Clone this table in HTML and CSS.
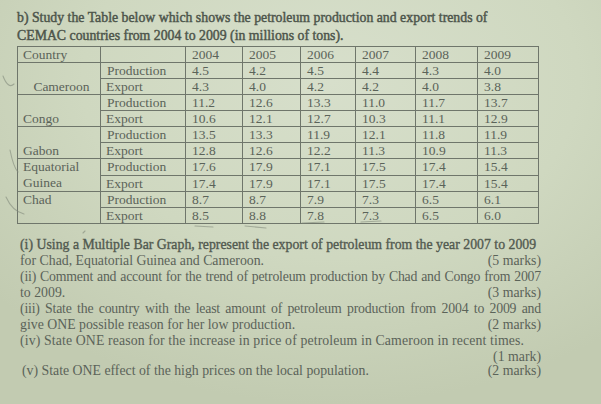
FILE: index.html
```html
<!DOCTYPE html>
<html lang="en">
<head>
<meta charset="utf-8">
<title>Petroleum production and export – CEMAC</title>
<link rel="stylesheet" href="styles.css">
</head>
<body>
<div class="sheet">
  <p class="head">b) Study the Table below which shows the petroleum production and export trends of<br>CEMAC countries from 2004 to 2009 (in millions of tons).</p>
  <table class="data">
    <colgroup>
      <col class="c-country"><col class="c-label"><col class="c-04"><col class="c-05"><col class="c-06"><col class="c-07"><col class="c-08"><col class="c-09">
    </colgroup>
    <tr><td>Country</td><td></td><td>2004</td><td>2005</td><td>2006</td><td>2007</td><td>2008</td><td>2009</td></tr>
    <tr><td rowspan="2" class="ctry center bottom">Cameroon</td><td>Production</td><td>4.5</td><td>4.2</td><td>4.5</td><td>4.4</td><td>4.3</td><td>4.0</td></tr>
    <tr><td>Export</td><td>4.3</td><td>4.0</td><td>4.2</td><td>4.2</td><td>4.0</td><td>3.8</td></tr>
    <tr><td rowspan="2" class="ctry bottom">Congo</td><td>Production</td><td>11.2</td><td>12.6</td><td>13.3</td><td>11.0</td><td>11.7</td><td>13.7</td></tr>
    <tr><td>Export</td><td>10.6</td><td>12.1</td><td>12.7</td><td>10.3</td><td>11.1</td><td>12.9</td></tr>
    <tr><td rowspan="2" class="ctry bottom">Gabon</td><td>Production</td><td>13.5</td><td>13.3</td><td>11.9</td><td>12.1</td><td>11.8</td><td>11.9</td></tr>
    <tr><td>Export</td><td>12.8</td><td>12.6</td><td>12.2</td><td>11.3</td><td>10.9</td><td>11.3</td></tr>
    <tr><td rowspan="2" class="ctry two">Equatorial<br>Guinea</td><td>Production</td><td>17.6</td><td>17.9</td><td>17.1</td><td>17.5</td><td>17.4</td><td>15.4</td></tr>
    <tr><td>Export</td><td>17.4</td><td>17.9</td><td>17.1</td><td>17.5</td><td>17.4</td><td>15.4</td></tr>
    <tr><td rowspan="2" class="ctry top">Chad</td><td>Production</td><td>8.7</td><td>8.7</td><td>7.9</td><td>7.3</td><td>6.5</td><td>6.1</td></tr>
    <tr><td>Export</td><td>8.5</td><td>8.8</td><td>7.8</td><td>7.3</td><td>6.5</td><td>6.0</td></tr>
  </table>

  <div class="questions">
    <div class="q">
      <div class="line heavy">(i) Using a Multiple Bar Graph, represent the export of petroleum from the year 2007 to 2009</div>
      <div class="line split"><span>for Chad, Equatorial Guinea and Cameroon.</span><span class="mk">(5 marks)</span></div>
    </div>
    <div class="q">
      <div class="line just">(ii) Comment and account for the trend of petroleum production by Chad and Congo from 2007</div>
      <div class="line split"><span>to 2009.</span><span class="mk">(3 marks)</span></div>
    </div>
    <div class="q">
      <div class="line just">(iii) State the country with the least amount of petroleum production from 2004 to 2009 and</div>
      <div class="line split"><span>give ONE possible reason for her low production.</span><span class="mk">(2 marks)</span></div>
    </div>
    <div class="q">
      <div class="line wide">(iv) State ONE reason for the increase in price of petroleum in Cameroon in recent times.</div>
      <div class="line split"><span></span><span class="mk">(1 mark)</span></div>
    </div>
    <div class="q last">
      <div class="line split indent"><span>(v) State ONE effect of the high prices on the local population.</span><span class="mk">(2 marks)</span></div>
    </div>
  </div>

  <svg class="pencil" width="601" height="404" viewBox="0 0 601 404" aria-hidden="true">
    <path d="M3 76 C6 84 10 88 14 84" />
    <path d="M10 150 C12 160 14 168 18 172" />
    <path d="M6 197 C10 206 16 212 24 214" />
    <path d="M195 226 L213 227" />
    <path d="M245 226 L266 228" />
    <path d="M302 223 L324 222" />
    <path d="M361 222 L381 221" />
    <path d="M83 233 L85 231" />
  </svg>
</div>
</body>
</html>
```

FILE: styles.css
```css
html, body {
  margin: 0;
  padding: 0;
}

body {
  width: 601px;
  height: 404px;
  overflow: hidden;
  background: radial-gradient(ellipse 75% 80% at 55% 20%, #d7dfcb 0%, #cfd8c0 55%, #c2cbb1 100%);
  font-family: "Liberation Serif", "Times New Roman", serif;
  color: #5b6359;
}

.sheet {
  position: relative;
  width: 601px;
  height: 404px;
  box-sizing: border-box;
  padding: 9px 0 0 17px;
}

.head {
  margin: 0 0 1px 0;
  width: 540px;
  font-size: 13.8px;
  line-height: 18px;
  color: #4d554b;
  -webkit-text-stroke: 0.45px #4d554b;
  white-space: nowrap;
}

.data {
  border-collapse: collapse;
  width: 521px;
  table-layout: fixed;
  font-size: 13.5px;
}

.c-country { width: 83px; }
.c-label { width: 85px; }
.c-04 { width: 57px; }
.c-05 { width: 58px; }
.c-06 { width: 55px; }
.c-07 { width: 60px; }
.c-08 { width: 62px; }
.c-09 { width: 61px; }

.data td {
  border: 1px solid #6f766b;
  height: 15px;
  line-height: 15px;
  padding: 0 0 0 6px;
  white-space: nowrap;
  vertical-align: middle;
}

.data td:first-child {
  padding-left: 5px;
}

.data .ctry {
  padding-left: 7px;
}

.data .center { text-align: center; padding-left: 0; }
.data .bottom { vertical-align: bottom; }
.data .top { vertical-align: top; }
.data .two { line-height: 16px; }

.questions {
  margin-top: 13px;
  width: 521px;
  padding-left: 3px;
  font-size: 13.8px;
  line-height: 16px;
}

.q.last {
  margin-top: -2px;
}

.line {
  white-space: nowrap;
}

.heavy {
  color: #525a50;
  -webkit-text-stroke: 0.35px #525a50;
}

.just {
  text-align: justify;
  text-align-last: justify;
  letter-spacing: -0.2px;
  word-spacing: -1px;
  white-space: normal;
}

.wide {
  letter-spacing: 0.12px;
}

.split {
  display: flex;
  justify-content: space-between;
}

.indent {
  padding-left: 2px;
}

.pencil {
  position: absolute;
  left: 0;
  top: 0;
  pointer-events: none;
}

.pencil path {
  fill: none;
  stroke: #828b7b;
  stroke-width: 1.1;
  stroke-linecap: round;
  opacity: 0.6;
}
```
